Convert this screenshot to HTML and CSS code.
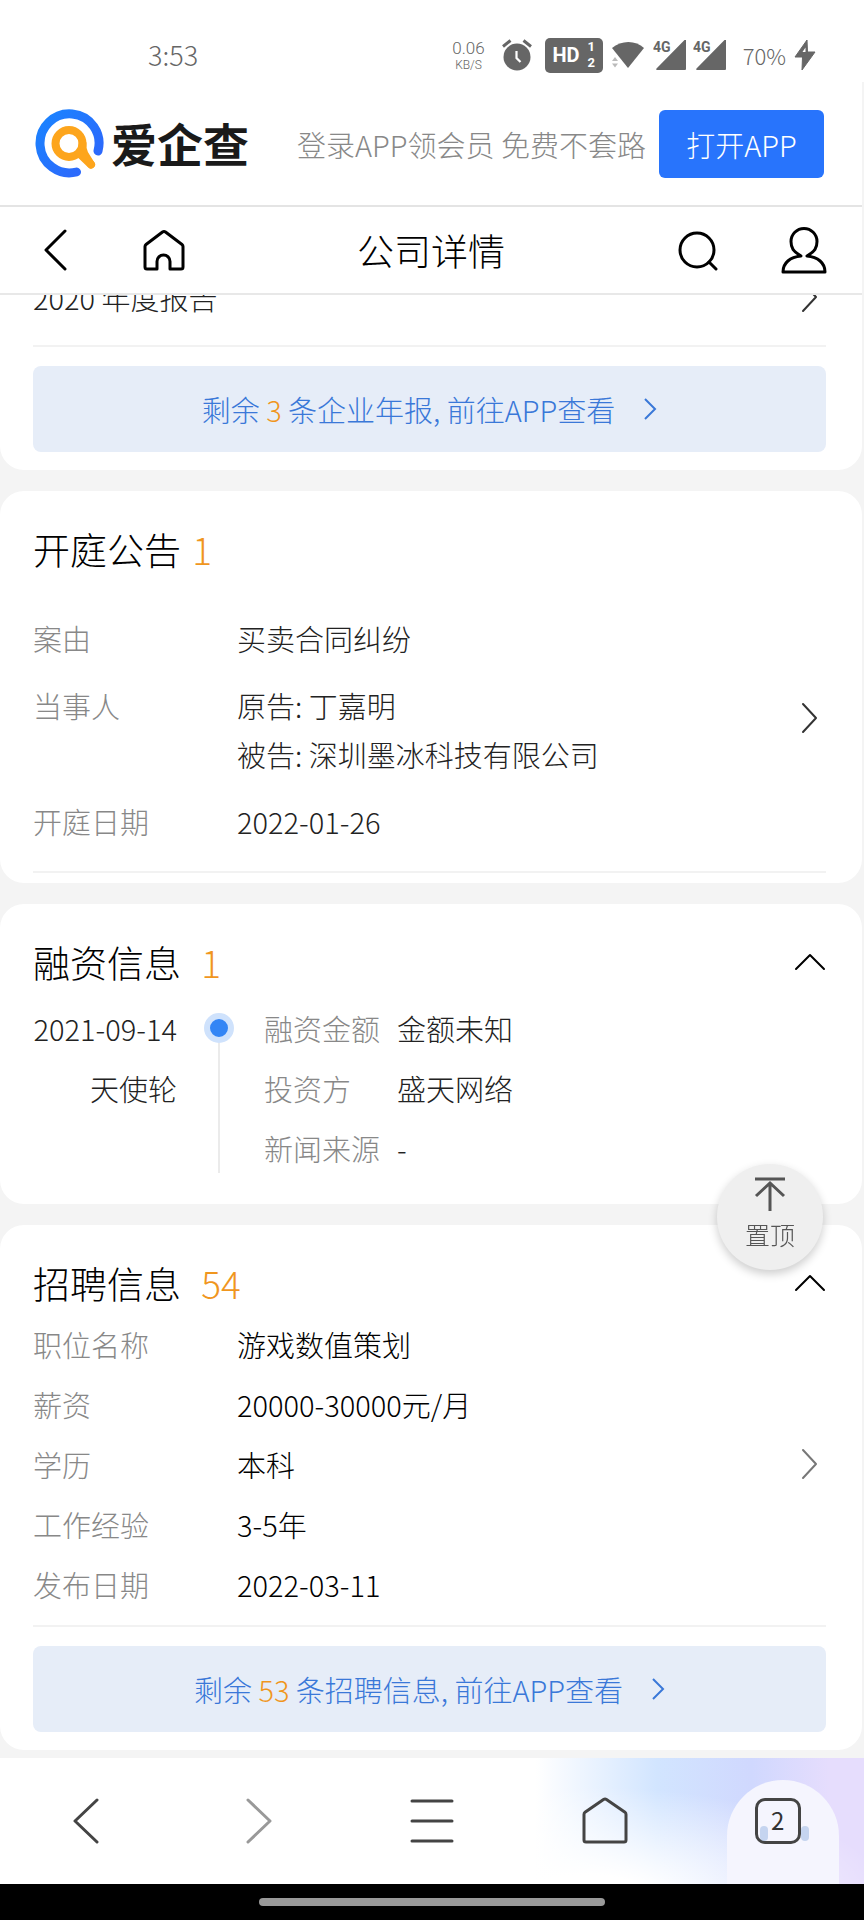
FILE: index.html
```html
<!DOCTYPE html>
<html lang="zh-CN">
<head>
  <meta charset="UTF-8">
  <meta name="viewport" content="width=device-width, initial-scale=1.0">
  <title>公司详情</title>
  <link rel="stylesheet" href="styles.css">
</head>
<body>

<!-- 状态栏 -->
<div class="status-bar">
  <span class="time">3:53</span>
  <div class="status-right">
    <div class="speed"><span>0.06</span><span class="unit">KB/S</span></div>
    <svg width="32" height="32" viewBox="0 0 32 32">
      <circle cx="16" cy="18" r="13.5" fill="#666"/>
      <path d="M2 7.500L9.500 1.500M30 7.500L22.500 1.500" stroke="#666" stroke-width="3" fill="none"/>
      <path d="M15.500 12v7l4 4" stroke="#fff" stroke-width="2.200" fill="none"/>
    </svg>
    <div class="hd">HD<span class="hd-num"><i>1</i><i>2</i></span></div>
    <svg width="34" height="30" viewBox="0 0 34 30">
      <path d="M1 8C10 0 25 0 33 8L17 28Z" fill="#666"/>
      <path d="M1 21l3-4 3 4zM1 23.500l3 4 3-4z" fill="#bbb"/>
    </svg>
    <svg class="ic-signal" width="34" height="32" viewBox="0 0 34 32">
      <path d="M33 1v29a1 1 0 0 1-1 1H4c-1 0-1-1-.500-1.500L31.500 1z" fill="#666"/>
      <text x="0" y="13" class="g4">4G</text>
    </svg>
    <svg class="ic-signal" width="34" height="32" viewBox="0 0 34 32">
      <path d="M33 1v29a1 1 0 0 1-1 1H4c-1 0-1-1-.500-1.500L31.500 1z" fill="#666"/>
      <text x="0" y="13" class="g4">4G</text>
    </svg>
    <span class="battery">70%</span>
    <svg width="22" height="32" viewBox="0 0 22 32">
      <path d="M13 1L1 18h7.500L8 31 21 13h-7.500z" fill="#666" stroke="#666" stroke-linejoin="round"/>
      <path d="M11.500 8.500L8.500 13h3z" fill="#fff"/>
    </svg>
  </div>
</div>

<!-- 顶部固定区 -->
<header class="header">
  <div class="promo">
    <a href="#" class="logo">
      <svg width="70" height="70" viewBox="0 0 70 70" fill="none" stroke-linecap="round">
        <defs>
          <linearGradient id="ring" x1="0" y1="0" x2="1" y2="1">
            <stop offset="0" stop-color="#1a84ff"/>
            <stop offset="1" stop-color="#3064fb"/>
          </linearGradient>
        </defs>
        <path d="M64 42A29.500 29.500 0 1 0 42.500 63" stroke="url(#ring)" stroke-width="9"/>
        <circle cx="35" cy="34.500" r="13.5" stroke="#fda51c" stroke-width="8"/>
        <path d="M48.500 35q-.500 6 2 10L57 55.500" stroke="#fda51c" stroke-width="8"/>
        <path d="M45 44l12 11.500" stroke="#fda51c" stroke-width="8"/>
      </svg>
      <span class="logo-text">爱企查</span>
    </a>
    <span class="slogan">登录APP领会员 免费不套路</span>
    <button type="button" class="btn-open">打开APP</button>
  </div>
  <nav class="nav">
    <div class="nav-side nav-start">
      <a href="#" class="back" aria-label="返回">
        <svg width="24" height="42" viewBox="0 0 24 42" class="line"><path d="M21 2L2 21l19 19"/></svg>
      </a>
      <a href="#" aria-label="首页">
        <svg width="42" height="42" viewBox="0 0 42 42" class="line"><path d="M3 15.500L19.500 3q1.500-1 3 0L39 15.500q1 .800 1 2V38q0 2-2 2H27V32.500a6.500 6.500 0 0 0-13 0V40H4q-2 0-2-2V17.500q0-1.200 1-2z"/></svg>
      </a>
    </div>
    <h1 class="nav-title">公司详情</h1>
    <div class="nav-side nav-end">
      <a href="#" aria-label="搜索">
        <svg width="42" height="42" viewBox="0 0 42 42" class="line"><circle cx="20" cy="21" r="17"/><path d="M32 33l7 7"/></svg>
      </a>
      <a href="#" aria-label="我的">
        <svg width="46" height="48" viewBox="0 0 46 48" class="line"><path d="M20 30C12 25 10 22 10 15.500a13 13 0 0 1 26 0C36 22 34 25 26 30 37 31 44 37 44 46H2c0-9 7-15 18-16z"/></svg>
      </a>
    </div>
  </nav>
</header>

<!-- 内容 -->
<main class="content">
  <section class="card card-report">
    <a href="#" class="report">
      <span>2020 年度报告</span>
      <svg class="arrow" width="18" height="32" viewBox="0 0 18 32"><path d="M2 2l13 14L2 30"/></svg>
    </a>
    <a href="#" class="more">
      <span>剩余 <em>3</em> 条企业年报, 前往APP查看</span>
      <svg width="14" height="24" viewBox="0 0 14 24"><path d="M2 2l10 10L2 22"/></svg>
    </a>
  </section>

  <section class="card card-court">
    <h2 class="card-title">开庭公告 <em>1</em></h2>
    <a href="#" class="record">
      <dl class="info">
        <dt>案由</dt><dd>买卖合同纠纷</dd>
        <dt>当事人</dt><dd>原告: 丁嘉明<br>被告: 深圳墨冰科技有限公司</dd>
        <dt>开庭日期</dt><dd>2022-01-26</dd>
      </dl>
      <svg class="arrow" width="18" height="32" viewBox="0 0 18 32"><path d="M2 2l13 14L2 30"/></svg>
    </a>
  </section>

  <section class="card card-fund">
    <div class="card-head">
      <h2 class="card-title wide">融资信息 <em>1</em></h2>
      <button type="button" class="fold" aria-label="收起">
        <svg width="32" height="18" viewBox="0 0 32 18" class="line"><path d="M2 16L16 2l14 14"/></svg>
      </button>
    </div>
    <div class="timeline">
      <div class="round"><div>2021-09-14</div><div>天使轮</div></div>
      <div class="axis"><span class="dot"></span></div>
      <dl class="info">
        <dt>融资金额</dt><dd>金额未知</dd>
        <dt>投资方</dt><dd>盛天网络</dd>
        <dt>新闻来源</dt><dd>-</dd>
      </dl>
    </div>
  </section>

  <section class="card card-job">
    <div class="card-head">
      <h2 class="card-title wide">招聘信息 <em>54</em></h2>
      <button type="button" class="fold" aria-label="收起">
        <svg width="32" height="18" viewBox="0 0 32 18" class="line"><path d="M2 16L16 2l14 14"/></svg>
      </button>
    </div>
    <a href="#" class="record">
      <dl class="info">
        <dt>职位名称</dt><dd>游戏数值策划</dd>
        <dt>薪资</dt><dd>20000-30000元/月</dd>
        <dt>学历</dt><dd>本科</dd>
        <dt>工作经验</dt><dd>3-5年</dd>
        <dt>发布日期</dt><dd>2022-03-11</dd>
      </dl>
      <svg class="arrow gray" width="18" height="32" viewBox="0 0 18 32"><path d="M2 2l13 14L2 30"/></svg>
    </a>
    <a href="#" class="more">
      <span>剩余 <em>53</em> 条招聘信息, 前往APP查看</span>
      <svg width="14" height="24" viewBox="0 0 14 24"><path d="M2 2l10 10L2 22"/></svg>
    </a>
  </section>
</main>

<!-- 置顶按钮 -->
<button type="button" class="to-top">
  <svg width="34" height="36" viewBox="0 0 34 36"><path d="M2 2h30M17 6v28M3 19L17 6l14 13"/></svg>
  置顶
</button>

<!-- 浏览器工具栏 -->
<footer class="toolbar">
  <a href="#" aria-label="后退"><svg width="28" height="46" viewBox="0 0 28 46"><path d="M25 2L3 23l22 21"/></svg></a>
  <a href="#" aria-label="前进" class="off"><svg width="28" height="46" viewBox="0 0 28 46"><path d="M3 2l22 21L3 44"/></svg></a>
  <a href="#" aria-label="菜单"><svg width="44" height="46" viewBox="0 0 44 46"><path d="M2 3h40M2 23h40M2 43h40"/></svg></a>
  <a href="#" aria-label="主页"><svg width="48" height="48" viewBox="0 0 48 48"><path d="M3 17.500q0-1.500 1-2.200L22.500 2.500q1.500-1 3 0L44 15.300q1 .700 1 2.200V43q0 2-2 2H5q-2 0-2-2z"/></svg></a>
  <a href="#" class="tabs" aria-label="标签页"><span class="tab-count">2</span></a>
</footer>
<div class="gesture"><span></span></div>

</body>
</html>
```
FILE: styles.css
```css
* {
  margin: 0;
  padding: 0;
  box-sizing: border-box;
}

body {
  display: flex;
  flex-direction: column;
  min-height: 100vh;
  background: #f4f4f4;
  color: #222;
  font-family: "Noto Sans CJK SC", sans-serif;
  font-weight: 300;
  font-size: 29px;
}

a {
  color: inherit;
  text-decoration: none;
}

button {
  border: none;
  background: none;
  font: inherit;
  cursor: pointer;
}

em, i {
  font-style: normal;
}

svg {
  display: block;
  flex: none;
}

.line {
  fill: none;
  stroke: #000;
  stroke-width: 3;
  stroke-linecap: round;
  stroke-linejoin: round;
}

/* 状态栏 */
.status-bar {
  display: flex;
  justify-content: space-between;
  align-items: center;
  height: 82px;
  padding: 28px 48px 0 148px;
  background: #fff;
  color: #666;
}

.time {
  font-size: 27px;
  line-height: 30px;
}

.status-right {
  display: flex;
  align-items: center;
  gap: 8px;
}

.speed {
  display: flex;
  flex-direction: column;
  align-items: center;
  margin-right: 8px;
  font-family: Roboto, sans-serif;
  font-size: 17px;
  line-height: 20px;
}

.speed .unit {
  font-size: 12px;
  line-height: 14px;
}

.hd {
  display: flex;
  align-items: center;
  justify-content: center;
  gap: 8px;
  width: 58px;
  height: 35px;
  margin-left: 4px;
  border-radius: 5px;
  background: #666;
  color: #fff;
  font-family: Roboto, sans-serif;
  font-size: 20px;
  font-weight: 700;
}

.hd-num {
  display: flex;
  flex-direction: column;
  font-size: 13px;
  line-height: 16px;
}

.ic-signal {
  margin-right: -2px;
}

.g4 {
  fill: #666;
  font-family: Roboto, sans-serif;
  font-size: 14px;
  font-weight: 700;
}

.battery {
  margin-left: 10px;
  font-size: 22px;
}

/* 顶部 */
.header {
  position: relative;
  z-index: 2;
  margin-right: 2px;
  background: #fff;
}

.promo {
  display: flex;
  align-items: center;
  justify-content: space-between;
  height: 125px;
  padding: 0 38px 0 34px;
  border-bottom: 2px solid #e4e4e4;
}

.logo {
  display: flex;
  align-items: center;
  gap: 7px;
}

.logo-text {
  padding-bottom: 4px;
  color: #1a1a1a;
  font-size: 46px;
  font-weight: 700;
  line-height: 66px;
}

.slogan {
  margin-left: 35px;
  color: #888;
}

.btn-open {
  width: 165px;
  height: 68px;
  border-radius: 6px;
  background: #2874fc;
  color: #fff;
}

.nav {
  display: flex;
  align-items: center;
  justify-content: space-between;
  height: 88px;
  padding: 0 35px;
  border-bottom: 2px solid #e8e8e8;
}

.nav-side {
  display: flex;
  flex: 1;
  align-items: center;
}

.nav-start {
  gap: 75px;
}

.back {
  margin-left: 9px;
}

.nav-end {
  justify-content: flex-end;
  gap: 62px;
}

.nav-title {
  color: #000;
  font-size: 37px;
  font-weight: 300;
  line-height: 48px;
}

/* 卡片 */
.content {
  display: flex;
  flex: 1;
  flex-direction: column;
  gap: 21px;
  margin-right: 2px;
}

.card {
  padding: 34px 36px 18px 33px;
  border-radius: 24px;
  background: #fff;
}

.card-head {
  display: flex;
  align-items: center;
  justify-content: space-between;
}

.card-title {
  color: #000;
  font-size: 37px;
  font-weight: 300;
  line-height: 48px;
}

.card-title em {
  margin-left: 3px;
  color: #f0961e;
}

.card-title.wide em {
  margin-left: 12px;
}

.fold .line {
  stroke-width: 2;
}

.arrow {
  margin-right: 7px;
  fill: none;
  stroke: #333;
  stroke-width: 2;
  stroke-linecap: round;
  stroke-linejoin: round;
}

.arrow.gray {
  stroke: #777;
}

.info {
  display: grid;
  grid-template-columns: 204px 1fr;
  flex: 1;
  line-height: 60px;
}

.info dt {
  color: #888;
}

.record {
  display: flex;
  align-items: center;
}

.more {
  display: flex;
  align-items: center;
  justify-content: center;
  gap: 28px;
  height: 86px;
  border-radius: 8px;
  background: #e6edf8;
  color: #3a78d8;
}

.more em {
  color: #f0961e;
}

.more svg {
  fill: none;
  stroke: #3a78d8;
  stroke-width: 2;
}

/* 年报, 上半部分滚动到导航栏下面 */
.card-report {
  margin-top: -46px;
  padding-top: 0;
}

.report {
  display: flex;
  align-items: center;
  justify-content: space-between;
  height: 98px;
  margin-bottom: 19px;
  border-bottom: 2px solid #f2f2f2;
}

/* 开庭公告 */
.card-court {
  padding-bottom: 10px;
}

.card-court .record {
  padding-bottom: 9px;
  border-bottom: 2px solid #f2f2f2;
}

.card-court .info {
  row-gap: 18px;
  padding: 41px 0 16px;
  line-height: 49px;
}

/* 融资信息 */
.card-fund {
  padding-bottom: 26px;
}

.timeline {
  display: grid;
  grid-template-columns: 144px 87px 1fr;
  margin-top: 12px;
}

.round {
  line-height: 60px;
  text-align: right;
}

.axis {
  display: flex;
  flex-direction: column;
  align-items: center;
  padding: 15px 3px 0 0;
}

.axis::after {
  content: "";
  flex: 1;
  width: 2px;
  margin-bottom: 5px;
  background: #ebebeb;
}

.dot {
  width: 30px;
  height: 30px;
  border: 6px solid #cfe2fc;
  border-radius: 50%;
  background: #3385f5;
}

.timeline .info {
  grid-template-columns: 133px 1fr;
}

/* 招聘信息 */
.card-job .record {
  margin: 7px 0 19px;
  padding-bottom: 11px;
  border-bottom: 2px solid #f2f2f2;
}

.card-job dd {
  color: #000;
}

/* 置顶 */
.to-top {
  position: fixed;
  right: 41px;
  bottom: 650px;
  z-index: 3;
  display: flex;
  flex-direction: column;
  align-items: center;
  gap: 6px;
  width: 106px;
  height: 106px;
  padding-top: 13px;
  border-radius: 50%;
  background: #efefef;
  box-shadow: 0 4px 10px rgba(0, 0, 0, 0.2);
  color: #555;
  font-size: 25px;
  line-height: 30px;
}

.to-top svg {
  fill: none;
  stroke: #555;
  stroke-width: 3;
}

/* 底部工具栏 */
.toolbar {
  display: flex;
  height: 126px;
  margin-top: 7px;
  background:
    radial-gradient(ellipse 300px 110px at 68% 110%, #fff 20%, rgba(255, 255, 255, 0) 100%),
    linear-gradient(90deg, #fff 62%, #d2e5ff 76%, #d0d8fe 87%, #e6ddfd 96%);
}

.toolbar a {
  display: flex;
  flex: 1;
  align-items: center;
  justify-content: center;
}

.toolbar svg {
  fill: none;
  stroke: #444;
  stroke-width: 3;
  stroke-linecap: round;
  stroke-linejoin: round;
}

.toolbar .off svg {
  stroke: #999;
}

.toolbar .tabs {
  position: relative;
}

.tabs::before {
  content: "";
  position: absolute;
  right: 25px;
  bottom: 0;
  width: 112px;
  height: 104px;
  border-radius: 56px 56px 0 0;
  background: #f5f5fe;
}

.tab-count {
  position: relative;
  width: 46px;
  height: 46px;
  border: 3px solid #444;
  border-radius: 10px;
  color: #333;
  font-size: 24px;
  font-weight: 400;
  line-height: 38px;
  text-align: center;
}

.tab-count::before,
.tab-count::after {
  content: "";
  position: absolute;
  bottom: 0;
  left: 2px;
  width: 8px;
  height: 15px;
  border-radius: 4px;
  background: rgba(150, 180, 225, 0.5);
}

.tab-count::after {
  left: 43px;
}

.gesture {
  display: flex;
  justify-content: center;
  height: 36px;
  padding-top: 14px;
  background: #000;
}

.gesture span {
  width: 40%;
  height: 8px;
  border-radius: 4px;
  background: #999;
}
```
